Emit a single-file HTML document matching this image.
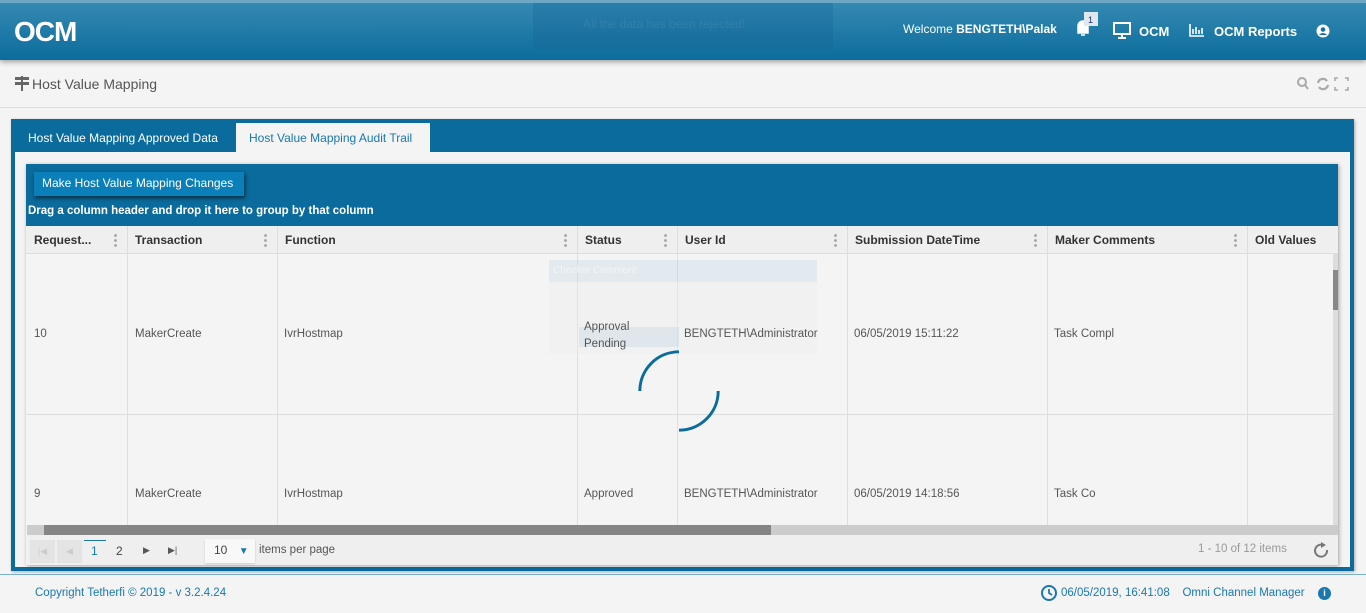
<!DOCTYPE html>
<html><head><meta charset="utf-8"><style>
*{box-sizing:border-box;margin:0;padding:0}
body{width:1366px;height:613px;overflow:hidden;background:#f4f4f4;font-family:"Liberation Sans",sans-serif;position:relative;color:#555}
.abs{position:absolute}
#hdr{left:0;top:0;width:1366px;height:60px;background:linear-gradient(#3589b2,#0c6c9d);border-top:3px solid #6fa6c4;box-shadow:0 2px 5px rgba(0,0,0,.35)}
.w{color:#fff;font-size:13px;font-weight:bold}
.col{position:absolute;top:0;height:100%;border-right:1px solid #dedede}
.hd{position:absolute;top:226px;height:28px;font-size:12px;font-weight:bold;color:#333;line-height:28px;padding-left:7px;border-right:1px solid #ddd}
.dots{position:absolute;right:10px;top:7px;width:3px;height:14px;background:radial-gradient(circle,#aaa 1.3px,transparent 1.6px) 0 0/3px 5px repeat-y}
.c{position:absolute;font-size:11.5px;color:#555}
</style></head><body>
<div id="hdr" class="abs">
 <div class="abs w" style="left:14px;top:13px;font-size:28px;letter-spacing:-1px">OCM</div>
 <div class="abs" style="left:533px;top:0;width:300px;height:46px;background:rgba(20,100,150,.3)"></div>
 <div class="abs" style="left:583px;top:14px;color:rgba(255,255,255,.08);font-size:12px">All the data has been rejected!</div>
 <div class="abs" style="left:903px;top:19px;color:#fff;font-size:12px">Welcome <b>BENGTETH\Palak</b></div>
 <svg class="abs" style="left:1074px;top:8px" width="26" height="28"><path d="M4 22 L4 15 A5 5 0 0 1 14 15 L14 22 Z M7 24 h4" fill="#fff" stroke="#fff" stroke-width="1.5"/><rect x="10" y="1" width="14" height="14" fill="#dfe8ee"/><text x="14" y="12" font-size="9" fill="#236" font-family="Liberation Sans">1</text></svg>
 <svg class="abs" style="left:1113px;top:19px" width="18" height="17"><rect x="1" y="1" width="16" height="11" fill="none" stroke="#fff" stroke-width="2"/><path d="M9 12 v3 M5 16 h8" stroke="#fff" stroke-width="2"/></svg>
 <div class="abs w" style="left:1139px;top:21px">OCM</div>
 <svg class="abs" style="left:1189px;top:21px" width="16" height="13"><path d="M1 0 V12 H15 M4 10 V5 M7 10 V3 M10 10 V6 M13 10 V4" stroke="#fff" stroke-width="1.6" fill="none"/></svg>
 <div class="abs w" style="left:1214px;top:21px">OCM Reports</div>
 <svg class="abs" style="left:1316px;top:21px" width="14" height="14"><circle cx="7" cy="7" r="6.5" fill="#fff"/><circle cx="7" cy="5.5" r="2.3" fill="#1670a0"/><path d="M3 11 Q7 7 11 11" fill="#1670a0"/></svg>
</div>
<svg class="abs" style="left:15px;top:76px" width="16" height="15"><rect x="0" y="1" width="14" height="3" fill="#666"/><rect x="0" y="6" width="14" height="3" fill="#666"/><rect x="6" y="0" width="2" height="15" fill="#666"/></svg>
<div class="abs" style="left:32px;top:76px;font-size:14px;color:#555">Host Value Mapping</div>
<svg class="abs" style="left:1297px;top:77px" width="56" height="14"><circle cx="5" cy="5" r="4" fill="none" stroke="#aaa" stroke-width="2"/><path d="M8 8 L11 12" stroke="#aaa" stroke-width="2"/><path d="M21 6 A5 5 0 0 1 30 4 M31 8 A5 5 0 0 1 22 10" fill="none" stroke="#aaa" stroke-width="2.2"/><path d="M38 4 V1 H41 M48 1 H51 V4 M51 10 V13 H48 M41 13 H38 V10" fill="none" stroke="#aaa" stroke-width="1.6"/></svg>
<div class="abs" style="left:0;top:107px;width:1366px;height:1px;background:#ddd"></div>
<div class="abs" style="left:11px;top:119px;width:1343px;height:452px;background:#0b6b9c;box-shadow:1px 1px 3px rgba(0,0,0,.3)"></div>
<div class="abs" style="left:28px;top:131px;font-size:12px;color:#fff">Host Value Mapping Approved Data</div>
<div class="abs" style="left:236px;top:123px;width:194px;height:30px;background:#f4f4f4;color:#1a78ae;font-size:12px;padding:8px 0 0 13px">Host Value Mapping Audit Trail</div>
<div class="abs" style="left:15px;top:152px;width:1335px;height:415px;background:#f4f4f4"></div>
<div class="abs" style="left:26px;top:164px;width:1312px;height:401px;background:#f4f4f4;box-shadow:1px 1px 4px rgba(0,0,0,.35);overflow:hidden">
 <div class="abs" style="left:0;top:0;width:1312px;height:62px;background:#0b6b9c"></div>
 <div class="abs" style="left:8px;top:8px;width:210px;height:24px;background:#0a7fb9;color:#fff;font-size:12px;line-height:22px;padding-left:8px;box-shadow:1px 2px 4px rgba(0,0,0,.6)">Make Host Value Mapping Changes</div>
 <div class="abs" style="left:2px;top:41px;color:#fff;font-size:11.5px;font-weight:bold">Drag a column header and drop it here to group by that column</div>
 <div class="abs" style="left:0;top:62px;width:1312px;height:28px;background:#efefef;border-bottom:1px solid #ddd"></div>
</div>
<div class="abs" style="left:27px;top:254px;width:1306px;height:271px">
 <div class="col" style="left:0;width:101px"></div><div class="col" style="left:0;width:251px"></div><div class="col" style="left:0;width:551px"></div><div class="col" style="left:0;width:651px"></div><div class="col" style="left:0;width:821px"></div><div class="col" style="left:0;width:1021px"></div><div class="col" style="left:0;width:1221px"></div>
 <div class="abs" style="left:0;top:160px;width:1306px;height:1px;background:#ddd"></div>
</div>
<div class="hd" style="left:27px;width:101px">Request...<i class="dots"></i></div>
<div class="hd" style="left:128px;width:150px">Transaction<i class="dots"></i></div>
<div class="hd" style="left:278px;width:300px">Function<i class="dots"></i></div>
<div class="hd" style="left:578px;width:100px">Status<i class="dots"></i></div>
<div class="hd" style="left:678px;width:170px">User Id<i class="dots"></i></div>
<div class="hd" style="left:848px;width:200px">Submission DateTime<i class="dots"></i></div>
<div class="hd" style="left:1048px;width:200px">Maker Comments<i class="dots"></i></div>
<div class="hd" style="left:1248px;width:85px;border:none">Old Values</div>
<div class="abs" style="left:549px;top:260px;width:268px;height:22px;background:rgba(190,212,228,.3)"></div>
<div class="abs" style="left:549px;top:282px;width:268px;height:72px;background:rgba(238,238,238,.4)"></div>
<div class="abs" style="left:553px;top:265px;font-size:10px;color:rgba(255,255,255,.5)">Checker Comment</div>
<div class="abs" style="left:579px;top:327px;width:100px;height:20px;background:rgba(190,212,228,.35)"></div>
<div class="c" style="left:34px;top:328px">10</div><div class="c" style="left:135px;top:328px">MakerCreate</div><div class="c" style="left:284px;top:328px">IvrHostmap</div>
<div class="c" style="left:584px;top:319px;line-height:17px">Approval<br>Pending</div><div class="c" style="left:684px;top:328px">BENGTETH\Administrator</div><div class="c" style="left:854px;top:328px">06/05/2019 15:11:22</div><div class="c" style="left:1054px;top:328px">Task Compl</div>
<div class="c" style="left:34px;top:488px">9</div><div class="c" style="left:135px;top:488px">MakerCreate</div><div class="c" style="left:284px;top:488px">IvrHostmap</div>
<div class="c" style="left:584px;top:488px">Approved</div><div class="c" style="left:684px;top:488px">BENGTETH\Administrator</div><div class="c" style="left:854px;top:488px">06/05/2019 14:18:56</div><div class="c" style="left:1054px;top:488px">Task Co</div>
<svg class="abs" style="left:630px;top:342px" width="100" height="100"><path d="M10 50 A40 40 0 0 1 50 10 M90 50 A40 40 0 0 1 50 90" fill="none" stroke="#0b6b9c" stroke-width="3" transform="scale(.98)"/></svg>
<div class="abs" style="left:1333px;top:254px;width:5px;height:271px;background:#ddd"></div>
<div class="abs" style="left:1333px;top:270px;width:5px;height:40px;background:#888"></div>
<div class="abs" style="left:27px;top:525px;width:1311px;height:10px;background:#ccc"></div>
<div class="abs" style="left:44px;top:525px;width:727px;height:10px;background:#858585"></div>
<div class="abs" style="left:27px;top:535px;width:1311px;height:30px;background:#efefef"></div>
<div class="abs" style="left:30px;top:540px;width:25px;height:23px;background:#e4e4e4;color:#ccc;font-size:9px;text-align:center;line-height:23px">|◀</div>
<div class="abs" style="left:57px;top:540px;width:25px;height:23px;background:#e4e4e4;color:#ccc;font-size:9px;text-align:center;line-height:23px">◀</div>
<div class="abs" style="left:84px;top:540px;width:22px;height:1px;background:#1a78ae"></div>
<div class="abs" style="left:91px;top:544px;font-size:12px;color:#1a78ae">1</div>
<div class="abs" style="left:116px;top:544px;font-size:12px;color:#444">2</div>
<div class="abs" style="left:143px;top:545px;font-size:9px;color:#555">▶</div>
<div class="abs" style="left:168px;top:545px;font-size:9px;color:#555">▶|</div>
<div class="abs" style="left:205px;top:539px;width:50px;height:24px;background:#f8f8f8;box-shadow:0 1px 2px rgba(0,0,0,.15);font-size:12px;padding:4px 0 0 9px;color:#444">10 <span style="color:#1a78ae;font-size:10px;margin-left:8px">▼</span></div>
<div class="abs" style="left:259px;top:544px;font-size:11.5px;color:#555">items per page</div>
<div class="abs" style="left:1198px;top:543px;font-size:11.5px;color:#999">1 - 10 of 12 items</div>
<svg class="abs" style="left:1313px;top:542px" width="16" height="16"><path d="M10 3 A6 6 0 1 0 14 8" fill="none" stroke="#777" stroke-width="2"/><path d="M8 0 L13 3 L8 6 Z" fill="#777"/></svg>
<div class="abs" style="left:0;top:574px;width:1366px;height:1px;background:#7ab0cc"></div>
<div class="abs" style="left:35px;top:587px;font-size:11.5px;color:#1a78ae">Copyright Tetherfi © 2019 - v 3.2.4.24</div>
<svg class="abs" style="left:1041px;top:585px" width="16" height="16"><circle cx="8" cy="8" r="7" fill="none" stroke="#1a78ae" stroke-width="2"/><path d="M8 4 V8 L11 10" fill="none" stroke="#1a78ae" stroke-width="1.8"/></svg>
<div class="abs" style="left:1061px;top:587px;font-size:11.5px;color:#1a78ae">06/05/2019, 16:41:08 &nbsp;&nbsp; Omni Channel Manager</div>
<div class="abs" style="left:1318px;top:587px;width:13px;height:13px;border-radius:50%;background:#1a78ae;color:#fff;font-size:9px;text-align:center;line-height:13px;font-weight:bold">i</div>
</body></html>
